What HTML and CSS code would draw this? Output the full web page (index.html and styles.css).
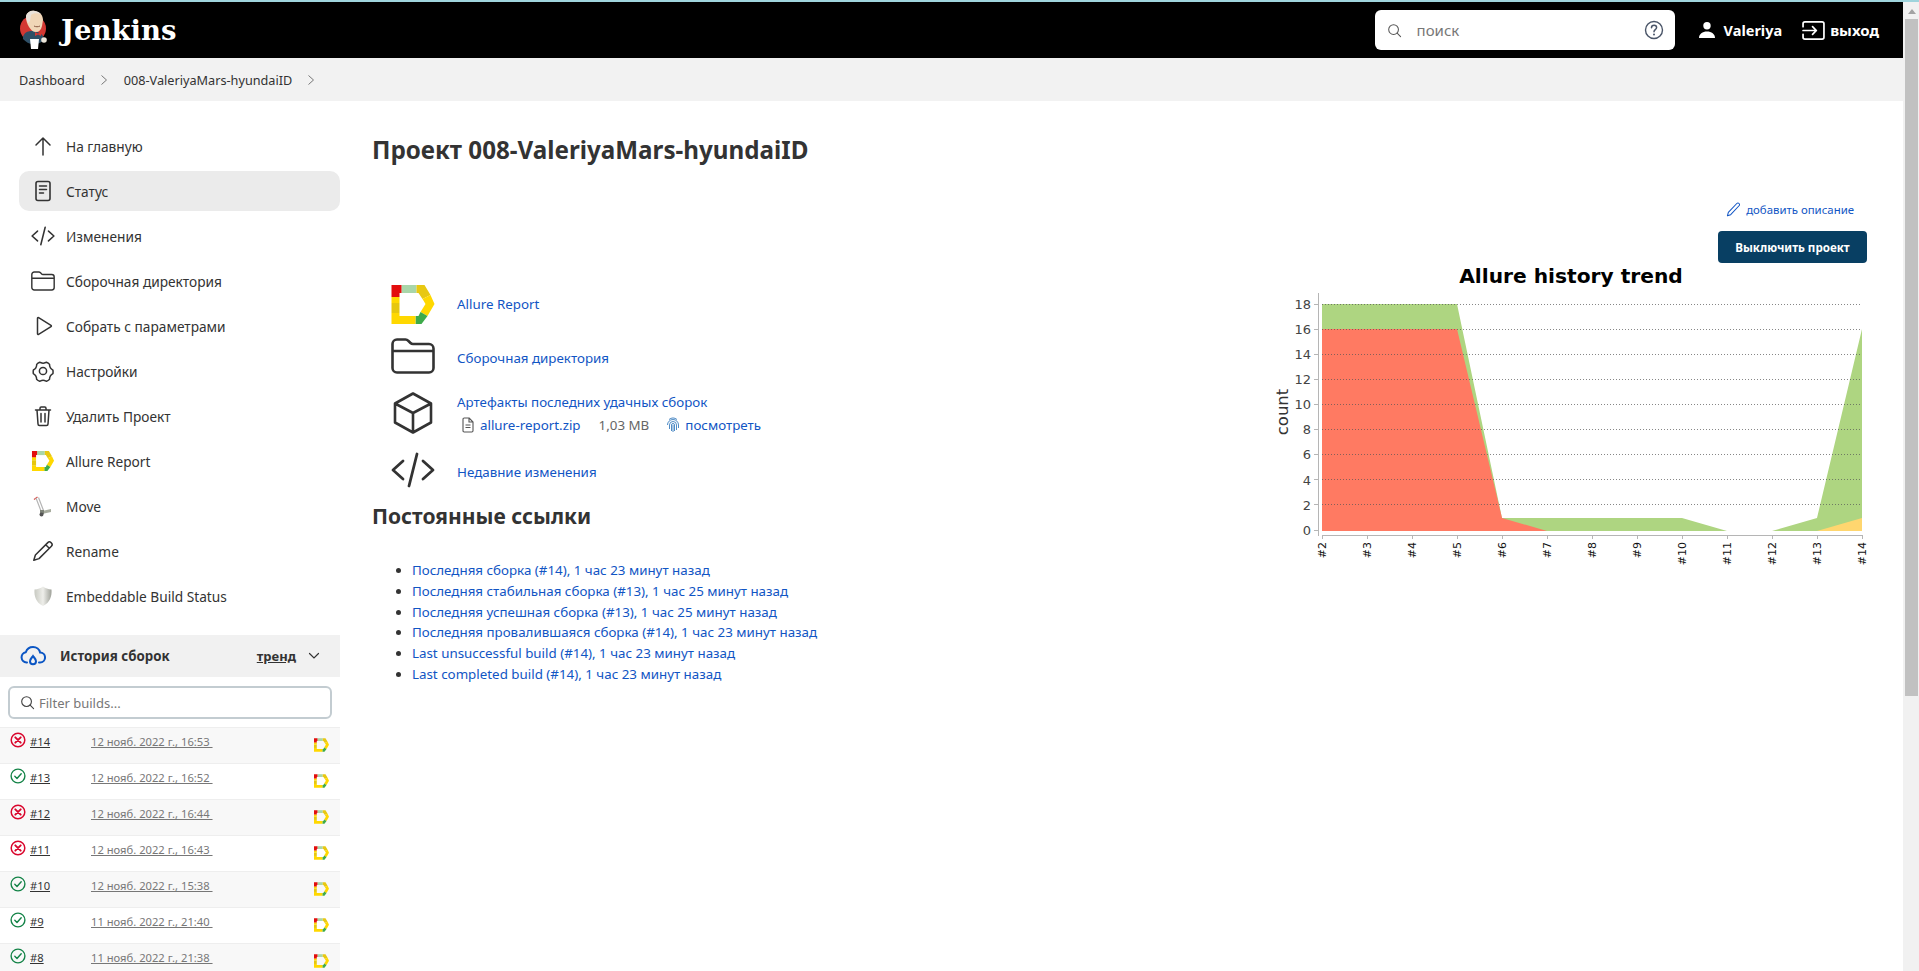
FILE: index.html
```html
<!DOCTYPE html>
<html lang="ru">
<head>
  <meta charset="UTF-8">
  <title>008-ValeriyaMars-hyundaiID [Jenkins]</title>
  <link rel="stylesheet" href="styles.css">
</head>
<body>
  <svg class="defs" width="0" height="0">
    <symbol id="allure" viewBox="0 0 43 39">
      <polygon points="10,0 25,0 25,8 10,8" fill="#a9d6a9"/>
      <polygon points="25,0 33,0 39,10 31,14 27,8 25,8" fill="#e8c812"/>
      <polygon points="39,10 43,19 36,31 29,27 34,19 31,14" fill="#ffd800"/>
      <polygon points="36,31 30,39 24,39 24,31 27,31 29,27" fill="#3eab4a"/>
      <polygon points="8,31 24,31 24,39 0,39 0,28 8,28" fill="#ffd800"/>
      <polygon points="0,18 8,18 8,28 0,28" fill="#e6c70e"/>
      <polygon points="0,12 8,12 8,18 0,18" fill="#ffd800"/>
      <polygon points="0,0 10,0 10,8 8,8 8,12 0,12" fill="#e30d0d"/>
    </symbol>
    <symbol id="folder" viewBox="0 0 44 36">
      <path d="M6 1.500h8.500c1.200 0 2 .5 3 1.500l2 2c.8.800 1.500 1 2.500 1H38c2.500 0 4.500 2 4.500 4.500V30c0 2.500-2 4.500-4.500 4.500H6c-2.500 0-4.500-2-4.500-4.500V6C1.500 3.500 3.500 1.500 6 1.500zM1.500 13h41" fill="none" stroke="currentColor" stroke-width="2.600" stroke-linejoin="round"/>
    </symbol>
    <symbol id="code" viewBox="0 0 44 34">
      <path d="M12 8 2 17l10 9M32 8l10 9-10 9M26 1l-8 32" fill="none" stroke="currentColor" stroke-width="2.800" stroke-linecap="round" stroke-linejoin="round"/>
    </symbol>
    <symbol id="ok" viewBox="0 0 16 16">
      <circle cx="8" cy="8" r="6.900" fill="none" stroke="#138347" stroke-width="1.400"/>
      <path d="M4.800 8.300l2.200 2.200 4.200-4.800" fill="none" stroke="#138347" stroke-width="1.400" stroke-linecap="round" stroke-linejoin="round"/>
    </symbol>
    <symbol id="fail" viewBox="0 0 16 16">
      <circle cx="8" cy="8" r="6.800" fill="none" stroke="#d9072d" stroke-width="1.500"/>
      <path d="M5.300 5.300l5.400 5.400M10.700 5.300l-5.400 5.400" fill="none" stroke="#d9072d" stroke-width="1.900" stroke-linecap="round"/>
    </symbol>
  </svg>

  <div class="window">
    <div class="viewport">
      <header class="topbar">
        <a class="brand">
          <svg class="brand-logo" viewBox="0 0 30 40">
            <circle cx="14" cy="18.500" r="13" fill="#d33833"/>
            <path d="M4 27c1-4 4-6 9-6s9 2 11 5l1 4c-3 3-7 4-11 4-4 0-7-2-10-5z" fill="#2f4f66"/>
            <path d="M7 6c1-4 5-6 9-5 5 1 8 4 8 9l-1 6c-1 4-3 6-6 6-3 0-5-2-7-5-2-3-3-7-3-11z" fill="#f0d6b7"/>
            <path d="M7 6c1-4 5-6 9-5 3 .5 5 2 6 3-4-1-8-1-10 1l-1 6-2 2c-1-2-2-4-2-7z" fill="#e9e2da"/>
            <path d="M15 16c2 1 4 1 6 0" fill="none" stroke="#8a5a44" stroke-width="1"/>
            <path d="M16 22l3 1.500 3-1.500v4l-3-1.500-3 1.500z" fill="#d33833"/>
            <path d="M11 29h9l-1 10h-7z" fill="#fff"/>
            <circle cx="25" cy="30" r="2.800" fill="#ece6da"/>
          </svg>
          <span class="brand-name">Jenkins</span>
        </a>
        <div class="search">
          <svg class="search-icon" viewBox="0 0 16 16"><circle cx="7" cy="7" r="5.200" fill="none" stroke="currentColor" stroke-width="1.100"/><path d="M10.800 10.800 14.500 14.500" stroke="currentColor" stroke-width="1.100" stroke-linecap="round"/></svg>
          <span class="search-text">поиск</span>
          <svg class="help-icon" viewBox="0 0 20 20"><circle cx="10" cy="10" r="8.500" fill="none" stroke="currentColor" stroke-width="1.400"/><path d="M7.500 7.800c0-1.500 1.100-2.500 2.600-2.500s2.500 1 2.500 2.300c0 2-2.600 2.100-2.600 4.100" fill="none" stroke="currentColor" stroke-width="1.500" stroke-linecap="round"/><circle cx="10" cy="14.400" r="1" fill="currentColor"/></svg>
        </div>
        <a class="top-link top-user">
          <svg class="top-icon" viewBox="0 0 18 18"><circle cx="9" cy="4.700" r="3.700" fill="#fff"/><path d="M1 17c0-4 3.500-6.500 8-6.500s8 2.500 8 6.500z" fill="#fff"/></svg>
          Valeriya
        </a>
        <a class="top-link top-exit">
          <svg class="exit-icon" viewBox="0 0 24 20"><path d="M1 6V3c0-1.100.9-2 2-2h18c1.100 0 2 .9 2 2v14c0 1.100-.9 2-2 2H3c-1.100 0-2-.9-2-2v-3M1 10h14M11 6l4 4-4 4" fill="none" stroke="#fff" stroke-width="1.800" stroke-linecap="round" stroke-linejoin="round"/></svg>
          выход
        </a>
      </header>

      <nav class="breadcrumbs">
        <a>Dashboard</a>
        <svg class="crumb-sep" viewBox="0 0 8 12"><path d="M1.500 1.500 6.500 6l-5 4.500" fill="none" stroke="currentColor" stroke-width="1"/></svg>
        <a>008-ValeriyaMars-hyundaiID</a>
        <svg class="crumb-sep" viewBox="0 0 8 12"><path d="M1.500 1.500 6.500 6l-5 4.500" fill="none" stroke="currentColor" stroke-width="1"/></svg>
      </nav>

      <div class="layout">
        <aside class="sidebar">
          <ul class="tasks">
            <li class="task">
              <svg class="task-icon" viewBox="0 0 24 24"><path d="M12 21V4M5 11l7-7 7 7" fill="none" stroke="currentColor" stroke-width="1.500" stroke-linecap="round" stroke-linejoin="round"/></svg>
              На главную
            </li>
            <li class="task active">
              <svg class="task-icon" viewBox="0 0 24 24"><rect x="5" y="2.500" width="14" height="19" rx="2" fill="none" stroke="currentColor" stroke-width="1.600"/><path d="M8.500 7h7M8.500 10.500h7M8.500 14h4" stroke="currentColor" stroke-width="1.500" stroke-linecap="round"/></svg>
              Статус
            </li>
            <li class="task">
              <svg class="task-icon"><use href="#code"/></svg>
              Изменения
            </li>
            <li class="task">
              <svg class="task-icon"><use href="#folder"/></svg>
              Сборочная директория
            </li>
            <li class="task">
              <svg class="task-icon" viewBox="0 0 24 24"><path d="M6.500 4.300v15.400c0 .6.600 1 1.100.7l12.400-7.700c.5-.3.500-1 0-1.300L7.600 3.600c-.5-.3-1.100.1-1.100.7z" fill="none" stroke="currentColor" stroke-width="1.500" stroke-linejoin="round"/></svg>
              Собрать с параметрами
            </li>
            <li class="task">
              <svg class="task-icon" viewBox="0 0 24 24"><circle cx="12" cy="12" r="3.600" fill="none" stroke="currentColor" stroke-width="1.500"/><path d="M8.500 2.800c1 .4 2 1.100 3.500 1.100s2.500-.7 3.500-1.100c1.300.5 2.500 1.200 3.400 2.300-.1 1.100.1 2.300.9 3.600s1.800 1.900 2.700 2.400c.2 1.400.2 2.400 0 3.800-.9.500-2 1.100-2.700 2.400s-1 2.500-.9 3.500c-.9 1-2.100 1.800-3.400 2.300-1-.5-2-1.100-3.500-1.100s-2.500.6-3.500 1.100c-1.300-.5-2.500-1.300-3.400-2.300.1-1-.2-2.200-.9-3.500S2.500 15.400 1.600 14.900c-.2-1.400-.2-2.400 0-3.800.9-.5 2-1.100 2.700-2.400s1-2.500.9-3.600c.9-1.100 2.100-1.800 3.300-2.300z" transform="translate(.8 .6) scale(.94)" fill="none" stroke="currentColor" stroke-width="1.600" stroke-linejoin="round"/></svg>
              Настройки
            </li>
            <li class="task">
              <svg class="task-icon" viewBox="0 0 24 24"><path d="M4.500 6h15M9 6V4.200C9 3.500 9.500 3 10.200 3h3.600c.7 0 1.200.5 1.200 1.200V6M6 6l1 14c0 .9.700 1.500 1.500 1.500h7c.8 0 1.500-.6 1.500-1.500l1-14M10 9.500v8.500M14 9.500v8.500" fill="none" stroke="currentColor" stroke-width="1.500" stroke-linecap="round" stroke-linejoin="round"/></svg>
              Удалить Проект
            </li>
            <li class="task">
              <svg class="task-icon task-icon--allure"><use href="#allure"/></svg>
              Allure Report
            </li>
            <li class="task">
              <svg class="task-icon" viewBox="0 0 24 24"><path d="M3 5.500 6.500 3" stroke="#d9534f" stroke-width="1.200"/><path d="M5 4l5 13M7.500 3.500l5 13" stroke="#b5b5b5" stroke-width="1.200"/><polygon points="11,17 20,15 20,18 11,20" fill="#a8ad9f"/><rect x="9" y="16" width="4" height="4" fill="#7d8277"/><circle cx="10.500" cy="20.500" r="2" fill="#555"/></svg>
              Move
            </li>
            <li class="task">
              <svg class="task-icon" viewBox="0 0 24 24"><path d="M16.800 3.600c.9-.9 2.300-.9 3.200 0l.4.400c.9.900.9 2.300 0 3.200L8 19.600 2.800 21.200l1.600-5.200zM14.700 5.700l3.600 3.600" fill="none" stroke="currentColor" stroke-width="1.500" stroke-linejoin="round"/></svg>
              Rename
            </li>
            <li class="task">
              <svg class="task-icon" viewBox="0 0 24 24"><defs><linearGradient id="shield" x1="0" x2="1" y1="0" y2="0"><stop offset="0" stop-color="#c8cac2"/><stop offset=".5" stop-color="#eeeeea"/><stop offset="1" stop-color="#9fa199"/></linearGradient></defs><path d="M12 2.500c2.500 1.800 5 2.700 8.500 3 .5 7-1.500 13-8.500 16.500C5 18.500 3 12.500 3.500 5.500 7 5.200 9.500 4.300 12 2.500z" fill="url(#shield)"/></svg>
              Embeddable Build Status
            </li>
          </ul>

          <div class="history-head">
            <svg class="history-icon" viewBox="0 0 26 24"><path d="M7 18.500H6.500a5.200 5.200 0 0 1-.7-10.300C7 4.700 10 3 13 3c3.500 0 6.500 2.400 7.100 5.500a5 5 0 0 1-.1 10H19" fill="none" stroke="#0b56c4" stroke-width="2" stroke-linecap="round"/><path d="M13 12c1.500 2 3 3.300 3 5.200a3 3 0 0 1-6 0c0-1.900 1.500-3.200 3-5.200z" fill="none" stroke="#0b56c4" stroke-width="2"/></svg>
            <span class="history-title">История сборок</span>
            <a class="history-trend">тренд</a>
            <svg class="history-chevron" viewBox="0 0 12 8"><path d="M1.500 1.500 6 6l4.500-4.500" fill="none" stroke="currentColor" stroke-width="1.200" stroke-linecap="round"/></svg>
          </div>

          <div class="filter">
            <svg class="filter-icon" viewBox="0 0 16 16"><circle cx="7" cy="7" r="5.200" fill="none" stroke="currentColor" stroke-width="1.200"/><path d="M10.800 10.800 14.500 14.500" stroke="currentColor" stroke-width="1.200" stroke-linecap="round"/></svg>
            Filter builds...
          </div>

          <div class="builds">
            <div class="build">
              <svg class="build-status"><use href="#fail"/></svg>
              <a class="build-num">#14</a><a class="build-date">12 нояб. 2022 г., 16:53&nbsp;</a>
              <svg class="build-report"><use href="#allure"/></svg>
            </div>
            <div class="build">
              <svg class="build-status"><use href="#ok"/></svg>
              <a class="build-num">#13</a><a class="build-date">12 нояб. 2022 г., 16:52&nbsp;</a>
              <svg class="build-report"><use href="#allure"/></svg>
            </div>
            <div class="build">
              <svg class="build-status"><use href="#fail"/></svg>
              <a class="build-num">#12</a><a class="build-date">12 нояб. 2022 г., 16:44&nbsp;</a>
              <svg class="build-report"><use href="#allure"/></svg>
            </div>
            <div class="build">
              <svg class="build-status"><use href="#fail"/></svg>
              <a class="build-num">#11</a><a class="build-date">12 нояб. 2022 г., 16:43&nbsp;</a>
              <svg class="build-report"><use href="#allure"/></svg>
            </div>
            <div class="build">
              <svg class="build-status"><use href="#ok"/></svg>
              <a class="build-num">#10</a><a class="build-date">12 нояб. 2022 г., 15:38&nbsp;</a>
              <svg class="build-report"><use href="#allure"/></svg>
            </div>
            <div class="build">
              <svg class="build-status"><use href="#ok"/></svg>
              <a class="build-num">#9</a><a class="build-date">11 нояб. 2022 г., 21:40&nbsp;</a>
              <svg class="build-report"><use href="#allure"/></svg>
            </div>
            <div class="build">
              <svg class="build-status"><use href="#ok"/></svg>
              <a class="build-num">#8</a><a class="build-date">11 нояб. 2022 г., 21:38&nbsp;</a>
              <svg class="build-report"><use href="#allure"/></svg>
            </div>
          </div>
        </aside>

        <main class="main">
          <h1 class="title">Проект 008-ValeriyaMars-hyundaiID</h1>
          <div class="actions">
            <a class="add-desc">
              <svg class="add-desc-icon" viewBox="0 0 16 16"><path d="M11.500 1.600c.7-.7 1.700-.7 2.400 0s.7 1.700 0 2.400L5 13.500 1.500 14.700l1-3.600z" fill="none" stroke="currentColor" stroke-width="1.100" stroke-linejoin="round"/></svg>
              добавить описание
            </a>
            <button class="btn-disable">Выключить проект</button>
          </div>

          <div class="content">
            <div class="content-left">
              <div class="links">
                <div class="link-row">
                  <svg class="link-icon link-icon--allure"><use href="#allure"/></svg>
                  <a>Allure Report</a>
                </div>
                <div class="link-row link-row--low">
                  <svg class="link-icon"><use href="#folder"/></svg>
                  <a>Сборочная директория</a>
                </div>
                <div class="link-row link-row--tall">
                  <svg class="link-icon" viewBox="0 0 44 44"><path d="M22 2.500 40 12.500v19L22 41.500 4 31.500v-19zM4 12.500 22 22l18-9.500M22 22v19.500" fill="none" stroke="currentColor" stroke-width="2.600" stroke-linejoin="round"/></svg>
                  <div>
                    <a>Артефакты последних удачных сборок</a>
                    <div class="artifact">
                      <svg class="artifact-file" viewBox="0 0 14 16"><path d="M2 2.200C2 1.500 2.500 1 3.200 1h5L12 5v8.800c0 .7-.5 1.200-1.200 1.200H3.200C2.500 15 2 14.500 2 13.800zM8 1v4h4M4.500 8h5M4.500 10.500h5" fill="none" stroke="#555" stroke-width="1.100"/></svg>
                      <a class="artifact-name">allure-report.zip</a>
                      <span class="artifact-size">1,03 MB</span>
                      <svg class="artifact-print" viewBox="0 0 14 16"><path d="M1.500 8a5.500 5.500 0 0 1 11 0v3M3.500 12V8a3.500 3.500 0 0 1 7 0v5M5.500 14V8a1.500 1.500 0 0 1 3 0v6M7 8v7M3 2.500a6.500 6.500 0 0 1 8 0" fill="none" stroke="#3c7fc0" stroke-width=".9"/></svg>
                      <a>посмотреть</a>
                    </div>
                  </div>
                </div>
                <div class="link-row link-row--low">
                  <svg class="link-icon"><use href="#code"/></svg>
                  <a>Недавние изменения</a>
                </div>
              </div>

              <h2 class="subtitle">Постоянные ссылки</h2>
              <ul class="permalinks">
                <li><a>Последняя сборка (#14), 1 час 23 минут назад</a></li>
                <li><a>Последняя стабильная сборка (#13), 1 час 25 минут назад</a></li>
                <li><a>Последняя успешная сборка (#13), 1 час 25 минут назад</a></li>
                <li><a>Последняя провалившаяся сборка (#14), 1 час 23 минут назад</a></li>
                <li><a>Last unsuccessful build (#14), 1 час 23 минут назад</a></li>
                <li><a>Last completed build (#14), 1 час 23 минут назад</a></li>
              </ul>
            </div>

            <svg class="trend" viewBox="0 0 601 302" width="601" height="302">
              <text class="trend-title" x="301" y="20" text-anchor="middle">Allure history trend</text>
              <text class="trend-axis-label" transform="translate(18 149) rotate(-90)" text-anchor="middle">count</text>
              <polygon fill="#aed581" points="52,41 187,41 232,255 277,255 322,255 367,255 412,255 457,268 502,268 547,255 592,66 592,268 52,268"/>
              <polygon fill="#ff7a62" points="52,66 187,66 232,255 277,268 52,268"/>
              <polygon fill="#ffd66f" points="547,268 592,255 592,268"/>
              <g class="trend-grid">
                <line x1="52" x2="591" y1="41.500" y2="41.500"/>
                <line x1="52" x2="591" y1="66.500" y2="66.500"/>
                <line x1="52" x2="591" y1="91.500" y2="91.500"/>
                <line x1="52" x2="591" y1="116.500" y2="116.500"/>
                <line x1="52" x2="591" y1="141.500" y2="141.500"/>
                <line x1="52" x2="591" y1="166.500" y2="166.500"/>
                <line x1="52" x2="591" y1="191.500" y2="191.500"/>
                <line x1="52" x2="591" y1="216.500" y2="216.500"/>
                <line x1="52" x2="591" y1="241.500" y2="241.500"/>
              </g>
              <path class="trend-axis" d="M48.500 30V273M52 272.500H592M44 41.500h4M44 66.500h4M44 91.500h4M44 116.500h4M44 141.500h4M44 166.500h4M44 191.500h4M44 216.500h4M44 241.500h4M44 267.500h4"/>
              <path class="trend-axis" d="M52.500 272v4M97.500 272v4M142.500 272v4M187.500 272v4M232.500 272v4M277.500 272v4M322.500 272v4M367.500 272v4M412.500 272v4M457.500 272v4M502.500 272v4M547.500 272v4M592.500 272v4"/>
              <g class="trend-y" text-anchor="end">
                <text x="41" y="46">18</text>
                <text x="41" y="71">16</text>
                <text x="41" y="96">14</text>
                <text x="41" y="121">12</text>
                <text x="41" y="146">10</text>
                <text x="41" y="171">8</text>
                <text x="41" y="196">6</text>
                <text x="41" y="222">4</text>
                <text x="41" y="247">2</text>
                <text x="41" y="272">0</text>
              </g>
              <g class="trend-x" text-anchor="end">
                <text transform="translate(56 279) rotate(-90)">#2</text>
                <text transform="translate(101 279) rotate(-90)">#3</text>
                <text transform="translate(146 279) rotate(-90)">#4</text>
                <text transform="translate(191 279) rotate(-90)">#5</text>
                <text transform="translate(236 279) rotate(-90)">#6</text>
                <text transform="translate(281 279) rotate(-90)">#7</text>
                <text transform="translate(326 279) rotate(-90)">#8</text>
                <text transform="translate(371 279) rotate(-90)">#9</text>
                <text transform="translate(416 279) rotate(-90)">#10</text>
                <text transform="translate(461 279) rotate(-90)">#11</text>
                <text transform="translate(506 279) rotate(-90)">#12</text>
                <text transform="translate(551 279) rotate(-90)">#13</text>
                <text transform="translate(596 279) rotate(-90)">#14</text>
              </g>
            </svg>
          </div>
        </main>
      </div>
    </div>

    <div class="scrollbar">
      <div class="scroll-arrow"></div>
      <div class="scroll-thumb"></div>
    </div>
  </div>
</body>
</html>
```

FILE: styles.css
```css
* {
  box-sizing: border-box;
}
html, body {
  margin: 0;
  height: 971px;
  overflow: hidden;
}
body {
  font-family: "Noto Sans", sans-serif;
  font-size: 14px;
  color: #333;
  background-color: #fff;
  border-top: 2px solid #9fd4dc;
}
.defs {
  display: block;
  height: 0;
}
a {
  color: inherit;
}
.window {
  display: flex;
  height: 969px;
}
.viewport {
  flex: 1;
  min-width: 0;
}

/* top bar */
.topbar {
  display: flex;
  align-items: center;
  height: 56px;
  padding: 0 24px 0 19px;
  background-color: #000;
  color: #fff;
}
.brand {
  display: flex;
  align-items: center;
  gap: 12px;
  margin-right: auto;
}
.brand-logo {
  width: 30px;
  height: 40px;
}
.brand-name {
  font-family: "DejaVu Serif", serif;
  font-size: 27.500px;
  font-weight: 700;
}
.search {
  display: flex;
  align-items: center;
  width: 300px;
  height: 40px;
  padding: 0 11px 0 12px;
  border-radius: 6px;
  background-color: #fff;
  color: #555;
}
.search-icon {
  width: 15px;
  height: 15px;
}
.search-text {
  flex: 1;
  margin-left: 15px;
  font-size: 15px;
  color: #777;
}
.help-icon {
  width: 20px;
  height: 20px;
  color: #4a5568;
}
.top-link {
  display: flex;
  align-items: center;
  font-size: 15px;
  font-weight: 700;
}
.top-user {
  gap: 8px;
  margin-left: 23px;
  font-size: 14.500px;
}
.top-exit {
  gap: 5px;
  margin-left: 20px;
}
.top-icon {
  width: 18px;
  height: 18px;
}
.exit-icon {
  width: 23px;
  height: 19px;
}

/* breadcrumbs */
.breadcrumbs {
  display: flex;
  align-items: center;
  height: 43px;
  padding-left: 19px;
  background-color: #f2f2f2;
  font-size: 12.700px;
  color: #333;
}
.crumb-sep {
  width: 8px;
  height: 12px;
  margin: 0 16px 0 15px;
  color: #777;
}

.layout {
  display: flex;
}

/* sidebar */
.sidebar {
  flex: none;
  width: 340px;
}
.tasks {
  list-style: none;
  margin: 0;
  padding: 25px 0 0 19px;
  font-size: 13.700px;
}
.task {
  display: flex;
  align-items: center;
  gap: 11px;
  height: 40px;
  margin-bottom: 5px;
  padding-left: 12px;
  border-radius: 10px;
}
.task.active {
  background-color: #ebebeb;
}
.task-icon {
  flex: none;
  width: 24px;
  height: 24px;
}
.task-icon--allure {
  height: 20px;
}
.history-head {
  display: flex;
  align-items: center;
  height: 42px;
  margin-top: 19px;
  padding: 0 20px;
  background-color: #f1f1f1;
  font-size: 13.300px;
}
.history-icon {
  width: 26px;
  height: 24px;
}
.history-title {
  flex: 1;
  margin-left: 14px;
  font-weight: 700;
}
.history-trend {
  font-size: 13px;
  font-weight: 700;
  text-decoration: underline;
}
.history-chevron {
  width: 12px;
  height: 8px;
  margin-left: 12px;
}
.filter {
  display: flex;
  align-items: center;
  gap: 4px;
  height: 33px;
  margin: 9px 8px 8px;
  padding-left: 10px;
  border: 2px solid #c3ccd1;
  border-radius: 6px;
  font-size: 13px;
  color: #777;
}
.filter-icon {
  width: 15px;
  height: 15px;
  color: #444;
}
.build {
  display: flex;
  align-items: flex-start;
  height: 36px;
  padding: 4px 11px 0 10px;
  border-top: 1px solid #eee;
  font-size: 11.200px;
}
.build:nth-child(odd) {
  background-color: #f8f8f8;
}
.build-status {
  flex: none;
  width: 16px;
  height: 16px;
}
.build-num {
  width: 61px;
  margin: 2px 0 0 4px;
  text-decoration: underline;
}
.build-date {
  flex: 1;
  margin-top: 2px;
  color: #777;
  text-decoration: underline;
}
.build-report {
  flex: none;
  width: 15px;
  height: 14px;
  margin-top: 6px;
}

/* main part */
.main {
  flex: 1;
  min-width: 0;
  padding: 34px 36px 0 32px;
}
.title {
  margin: 0;
  font-size: 24.200px;
  line-height: 30px;
  font-weight: 700;
}
.actions {
  display: flex;
  flex-direction: column;
  align-items: flex-end;
  margin-top: 34px;
}
.add-desc {
  display: flex;
  align-items: center;
  gap: 5px;
  height: 20px;
  margin-right: 13px;
  font-size: 11.400px;
  color: #1155c4;
}
.add-desc-icon {
  width: 15px;
  height: 15px;
}
.btn-disable {
  width: 149px;
  height: 32px;
  margin-top: 12px;
  border: none;
  border-radius: 4px;
  background-color: #083f63;
  color: #fff;
  font-family: inherit;
  font-size: 11.600px;
  font-weight: 700;
}
.content {
  display: flex;
  justify-content: space-between;
  margin-right: -4px;
}
.content-left {
  padding-top: 17px;
  font-size: 13.350px;
}
.links {
  display: flex;
  flex-direction: column;
  gap: 4px;
  color: #1155c4;
}
.link-row {
  display: flex;
  align-items: center;
  gap: 22px;
  height: 48px;
  padding-left: 19px;
}
.link-row--low > a {
  padding-top: 4px;
}
.link-row--tall {
  height: 58px;
}
.link-icon {
  flex: none;
  width: 44px;
  height: 44px;
  color: #333;
}
.link-icon--allure {
  height: 39px;
}
.artifact {
  display: flex;
  align-items: center;
  margin-top: 5px;
  padding-left: 4px;
}
.artifact-file {
  width: 14px;
  height: 16px;
  margin-right: 5px;
}
.artifact-size {
  margin: 0 17px 0 18px;
  color: #666;
}
.artifact-print {
  width: 14px;
  height: 16px;
  margin-right: 5px;
}
.subtitle {
  margin: 9px 0 0;
  font-size: 21px;
  line-height: 26px;
  font-weight: 700;
}
.permalinks {
  margin: 31px 0 0;
  padding-left: 40px;
  color: #333;
}
.permalinks li {
  height: 20.800px;
  line-height: 20.800px;
}
.permalinks a {
  color: #1155c4;
}

/* chart */
.trend {
  flex: none;
  display: block;
}
.trend-title {
  font-family: "DejaVu Sans", sans-serif;
  font-size: 20.200px;
  font-weight: 700;
  fill: #000;
}
.trend-axis-label {
  font-family: "DejaVu Sans", sans-serif;
  font-size: 16.500px;
  fill: #333;
}
.trend-grid line {
  stroke: #555;
  stroke-width: 1;
  stroke-dasharray: 1 2;
  opacity: .7;
}
.trend-axis {
  fill: none;
  stroke: #b5b5b5;
  stroke-width: 1;
}
.trend-y text {
  font-family: "DejaVu Sans", sans-serif;
  font-size: 13px;
  fill: #444;
}
.trend-x text {
  font-family: "DejaVu Sans", sans-serif;
  font-size: 11px;
  fill: #111;
}

/* fake browser scrollbar */
.scrollbar {
  flex: none;
  width: 16px;
  background-color: #f1f1f1;
  padding: 0 1px 0 2px;
}
.scroll-arrow {
  width: 0;
  height: 0;
  margin: 7px auto 5px;
  border-left: 4px solid transparent;
  border-right: 4px solid transparent;
  border-bottom: 5px solid #a3a3a3;
}
.scroll-thumb {
  height: 677px;
  background-color: #c1c1c1;
}
```
